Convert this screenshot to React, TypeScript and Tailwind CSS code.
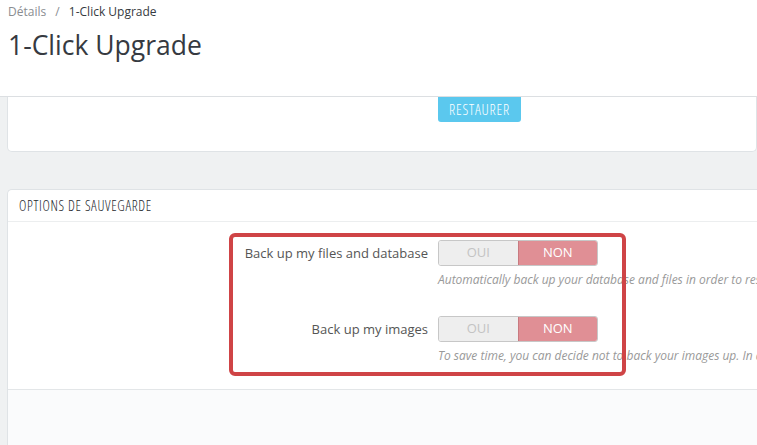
import React from "react";

function Switch() {
  return (
    <div className="flex h-[26px] w-[160px] rounded-[3px] border border-[#c7c7c7] overflow-hidden text-[13px]">
      <div className="flex-1 flex items-center justify-center bg-[#eeeeee] text-[#c3c3c3]">OUI</div>
      <div className="flex-1 flex items-center justify-center bg-[#e08f95] text-white border-l border-[#c87a80]">NON</div>
    </div>
  );
}

function Row({ label, help }: { label: string; help: string }) {
  return (
    <div className="flex">
      <div className="w-[430px] pr-[10px] text-right text-[13px] text-[#555] pt-[4px] shrink-0">{label}</div>
      <div className="flex flex-col shrink-0">
        <Switch />
        <div className="mt-[5px] text-[12px] italic text-[#999] whitespace-nowrap">{help}</div>
      </div>
    </div>
  );
}

export default function App() {
  return (
    <div className="w-[757px] h-[445px] overflow-hidden bg-[#eff1f2] relative" style={{ fontFamily: '"Open Sans", sans-serif' }}>
      <div className="bg-white border-b border-[#dcdfe2] h-[97px] px-[8px] pt-[3px]">
        <div className="text-[12px] text-[#8a8d91]">
          Détails <span className="mx-[6px]">/</span> <span className="text-[#363a41]">1-Click Upgrade</span>
        </div>
        <div className="text-[26.5px] text-[#363a41] mt-[7px] leading-[34px]">1-Click Upgrade</div>
      </div>
      <div className="ml-[7px] bg-white border border-t-0 border-[#dfe3e6] rounded-b-[5px] h-[55px] pl-[430px]">
        <div className="w-[83px] h-[25px] bg-[#5bc8ee] rounded-b-[3px] text-white text-[14.5px] font-light tracking-[0.8px] flex items-center justify-center [font-stretch:75%]">
          RESTAURER
        </div>
      </div>
      <div className="ml-[7px] mt-[37px] bg-white border border-r-0 border-[#dfe3e6] rounded-tl-[5px]">
        <div className="h-[32px] border-b border-[#eceeef] pl-[11px] flex items-center text-[14px] font-light tracking-[0.65px] text-[#25282d] [font-stretch:75%]">
          OPTIONS DE SAUVEGARDE
        </div>
        <div className="pt-[18px] pb-[24px] flex flex-col gap-[27px]">
          <Row label="Back up my files and database" help="Automatically back up your database and files in order to restore your shop if needed." />
          <Row label="Back up my images" help="To save time, you can decide not to back your images up. In any case," />
        </div>
        <div className="h-[60px] bg-[#fafbfc] border-t border-[#e3e6e8]" />
      </div>
      <div className="absolute left-[229px] top-[233px] w-[397px] h-[143px] border-[4px] border-[#cf4446] rounded-[6px]" />
    </div>
  );
}
